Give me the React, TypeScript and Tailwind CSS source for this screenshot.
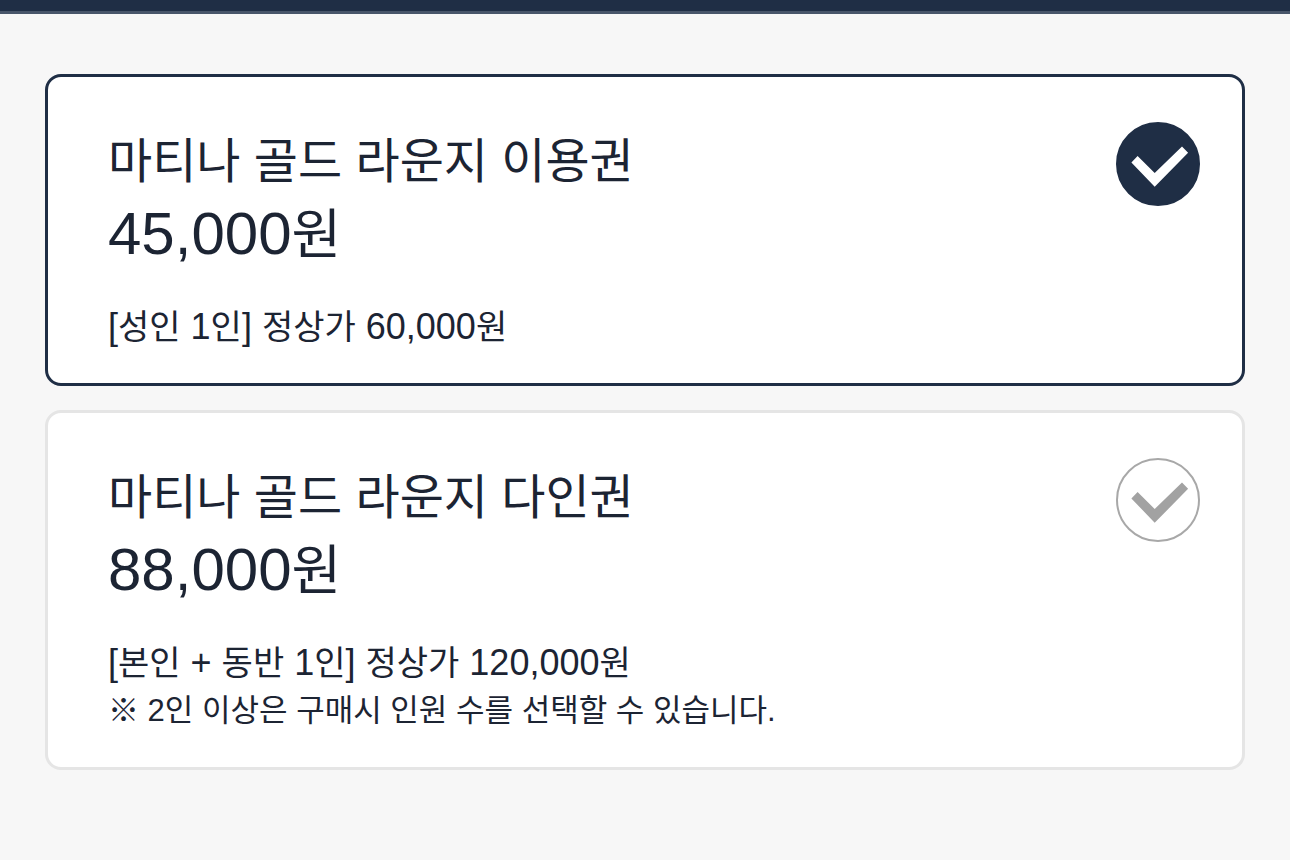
import React, { useState } from 'react';

interface Ticket {
    id: string;
    name: string;
    price: string;
    detail: string;
    notice?: string;
}

const tickets: Ticket[] = [
    {
        id: 'single',
        name: '마티나 골드 라운지 이용권',
        price: '45,000',
        detail: '[성인 1인] 정상가 60,000원',
    },
    {
        id: 'group',
        name: '마티나 골드 라운지 다인권',
        price: '88,000',
        detail: '[본인 + 동반 1인] 정상가 120,000원',
        notice: '※ 2인 이상은 구매시 인원 수를 선택할 수 있습니다.',
    },
];

const CheckMark: React.FC<{ checked: boolean }> = ({ checked }) => (
    <svg viewBox="0 0 84 84" className="size-[84px] shrink-0" aria-hidden="true">
        <circle
            cx="42"
            cy="42"
            r="41"
            fill={checked ? '#1f2e45' : '#ffffff'}
            stroke={checked ? '#1f2e45' : '#a8a8a8'}
            strokeWidth="2"
        />
        <path
            d="M15.400 40.400 L21.600 34 L38.700 51 L66 24.400 L72.100 30.800 L38.700 64.800 Z"
            fill={checked ? '#ffffff' : '#a2a2a2'}
        />
    </svg>
);

// Figures and signs are set slightly larger than the Hangul around them
const DetailText: React.FC<{ text: string }> = ({ text }) => (
    <>
        {text.split(/([\d,+[\] ]+)/).map((part, idx) =>
            idx % 2 === 1 ? (
                <span key={idx} className="text-[36px]">
                    {part}
                </span>
            ) : (
                part
            )
        )}
    </>
);

interface TicketCardProps {
    ticket: Ticket;
    checked: boolean;
    onSelect: () => void;
}

const TicketCard: React.FC<TicketCardProps> = ({ ticket, checked, onSelect }) => {
    return (
        <label
            className={`
                flex items-start justify-between rounded-2xl border-3 bg-white pt-[45px] pr-[42px] pb-8 pl-[60px] cursor-pointer
                has-focus-visible:outline-2 has-focus-visible:outline-offset-2
                ${checked ? 'border-[#1f2e45]' : 'border-[#e5e5e5]'}
            `}
        >
            <input type="radio" name="ticket" className="sr-only" checked={checked} onChange={onSelect} />
            <span className="flex flex-col pt-1">
                <span className="text-[48px] leading-[72px]">{ticket.name}</span>
                <span className="text-[60px] leading-[72px]">
                    {ticket.price}
                    <span className="text-[54px]">원</span>
                </span>
                <span className="mt-8 text-[34px] leading-12">
                    <DetailText text={ticket.detail} />
                </span>
                {ticket.notice && <span className="text-[31px] leading-12">{ticket.notice}</span>}
            </span>
            <CheckMark checked={checked} />
        </label>
    );
};

export default function App() {
    const [selected, setSelected] = useState('single');

    return (
        <div className="min-h-screen bg-[#f7f7f7] text-[#1c2433] font-['Liberation_Sans','Noto_Sans_CJK_KR',sans-serif]">
            <header className="h-[14px] border-b-3 border-[#48566a] bg-[#1f2e45]" />
            <main className="flex flex-col gap-6 px-[45px] pt-[60px] pb-20">
                {tickets.map((ticket) => (
                    <TicketCard
                        key={ticket.id}
                        ticket={ticket}
                        checked={ticket.id === selected}
                        onSelect={() => setSelected(ticket.id)}
                    />
                ))}
            </main>
        </div>
    );
}
